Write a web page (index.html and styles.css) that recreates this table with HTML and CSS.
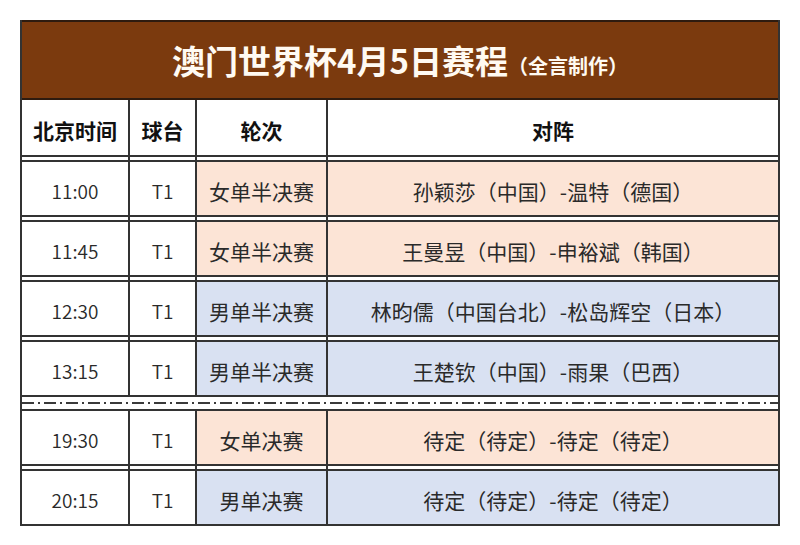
FILE: index.html
```html
<!DOCTYPE html>
<html lang="zh-CN">
<head>
<meta charset="utf-8">
<title>澳门世界杯4月5日赛程</title>
<link rel="stylesheet" href="styles.css">
</head>
<body>
<div class="sheet">
  <div class="title"><span class="main">澳门世界杯4月5日赛程</span><span class="sub">（全言制作）</span></div>

  <div class="row head">
    <div class="cell"><div class="in">北京时间</div></div>
    <div class="cell"><div class="in">球台</div></div>
    <div class="cell"><div class="in">轮次</div></div>
    <div class="cell"><div class="in">对阵</div></div>
  </div>

  <div class="row body peach">
    <div class="cell"><div class="in num">11:00</div></div>
    <div class="cell"><div class="in num">T1</div></div>
    <div class="cell"><div class="in tint">女单半决赛</div></div>
    <div class="cell"><div class="in tint">孙颖莎（中国）-温特（德国）</div></div>
  </div>

  <div class="row body peach">
    <div class="cell"><div class="in num">11:45</div></div>
    <div class="cell"><div class="in num">T1</div></div>
    <div class="cell"><div class="in tint">女单半决赛</div></div>
    <div class="cell"><div class="in tint">王曼昱（中国）-申裕斌（韩国）</div></div>
  </div>

  <div class="row body blue">
    <div class="cell"><div class="in num">12:30</div></div>
    <div class="cell"><div class="in num">T1</div></div>
    <div class="cell"><div class="in tint">男单半决赛</div></div>
    <div class="cell"><div class="in tint">林昀儒（中国台北）-松岛辉空（日本）</div></div>
  </div>

  <div class="row body blue">
    <div class="cell"><div class="in num">13:15</div></div>
    <div class="cell"><div class="in num">T1</div></div>
    <div class="cell"><div class="in tint">男单半决赛</div></div>
    <div class="cell"><div class="in tint">王楚钦（中国）-雨果（巴西）</div></div>
  </div>

  <div class="divider"><div class="dashdot"></div></div>

  <div class="row body peach first">
    <div class="cell"><div class="in num">19:30</div></div>
    <div class="cell"><div class="in num">T1</div></div>
    <div class="cell"><div class="in tint">女单决赛</div></div>
    <div class="cell"><div class="in tint">待定（待定）-待定（待定）</div></div>
  </div>

  <div class="row body blue">
    <div class="cell"><div class="in num">20:15</div></div>
    <div class="cell"><div class="in num">T1</div></div>
    <div class="cell"><div class="in tint">男单决赛</div></div>
    <div class="cell"><div class="in tint">待定（待定）-待定（待定）</div></div>
  </div>
</div>
</body>
</html>
```

FILE: styles.css
```css
html, body {
  margin: 0;
  padding: 0;
  background: #ffffff;
}

body {
  font-family: "Noto Sans CJK SC", "Noto Sans", sans-serif;
  color: #2a2a2a;
}

.sheet {
  margin: 20px 0 0 20px;
  width: 756px;
  border-left: 2px solid #333;
  border-right: 2px solid #333;
}

.title {
  height: 76px;
  background: #7b3a0e;
  border-top: 2px solid #2e1b0f;
  border-bottom: 2px solid #2e1b0f;
  display: flex;
  align-items: baseline;
  justify-content: center;
  color: #fffaf2;
  font-weight: 700;
  line-height: 76px;
}

.title .main {
  font-size: 33px;
}

.title .sub {
  font-size: 20px;
}

.row {
  display: grid;
  grid-template-columns: 108px 67px 131px 1fr;
}

.cell {
  border-right: 2px solid #333;
}

.cell:last-child {
  border-right: none;
}

.in {
  display: flex;
  align-items: center;
  justify-content: center;
  box-sizing: border-box;
  padding-top: 4px;
  white-space: nowrap;
}

.head .in {
  height: 57px;
  border-bottom: 2px solid #333;
  font-weight: 700;
  font-size: 21px;
  color: #111;
}

.body .cell {
  padding-top: 3px;
}

.body .in {
  height: 57px;
  border-top: 2px solid #333;
  border-bottom: 2px solid #333;
  font-size: 21px;
  background: #fff;
}

.body .in.num {
  font-size: 19px;
  font-weight: 350;
  color: #2a2a2a;
}

.peach .in.tint {
  background: #fce4d6;
}

.blue .in.tint {
  background: #d9e1f2;
}

.body.first .cell {
  padding-top: 0;
}

.divider {
  height: 12px;
  display: flex;
  align-items: center;
}

.dashdot {
  width: 100%;
  height: 2px;
  background: repeating-linear-gradient(to right,
    #3a3a3a 0, #3a3a3a 12px,
    transparent 12px, transparent 16px,
    #3a3a3a 16px, #3a3a3a 18px,
    transparent 18px, transparent 22px);
}
```
